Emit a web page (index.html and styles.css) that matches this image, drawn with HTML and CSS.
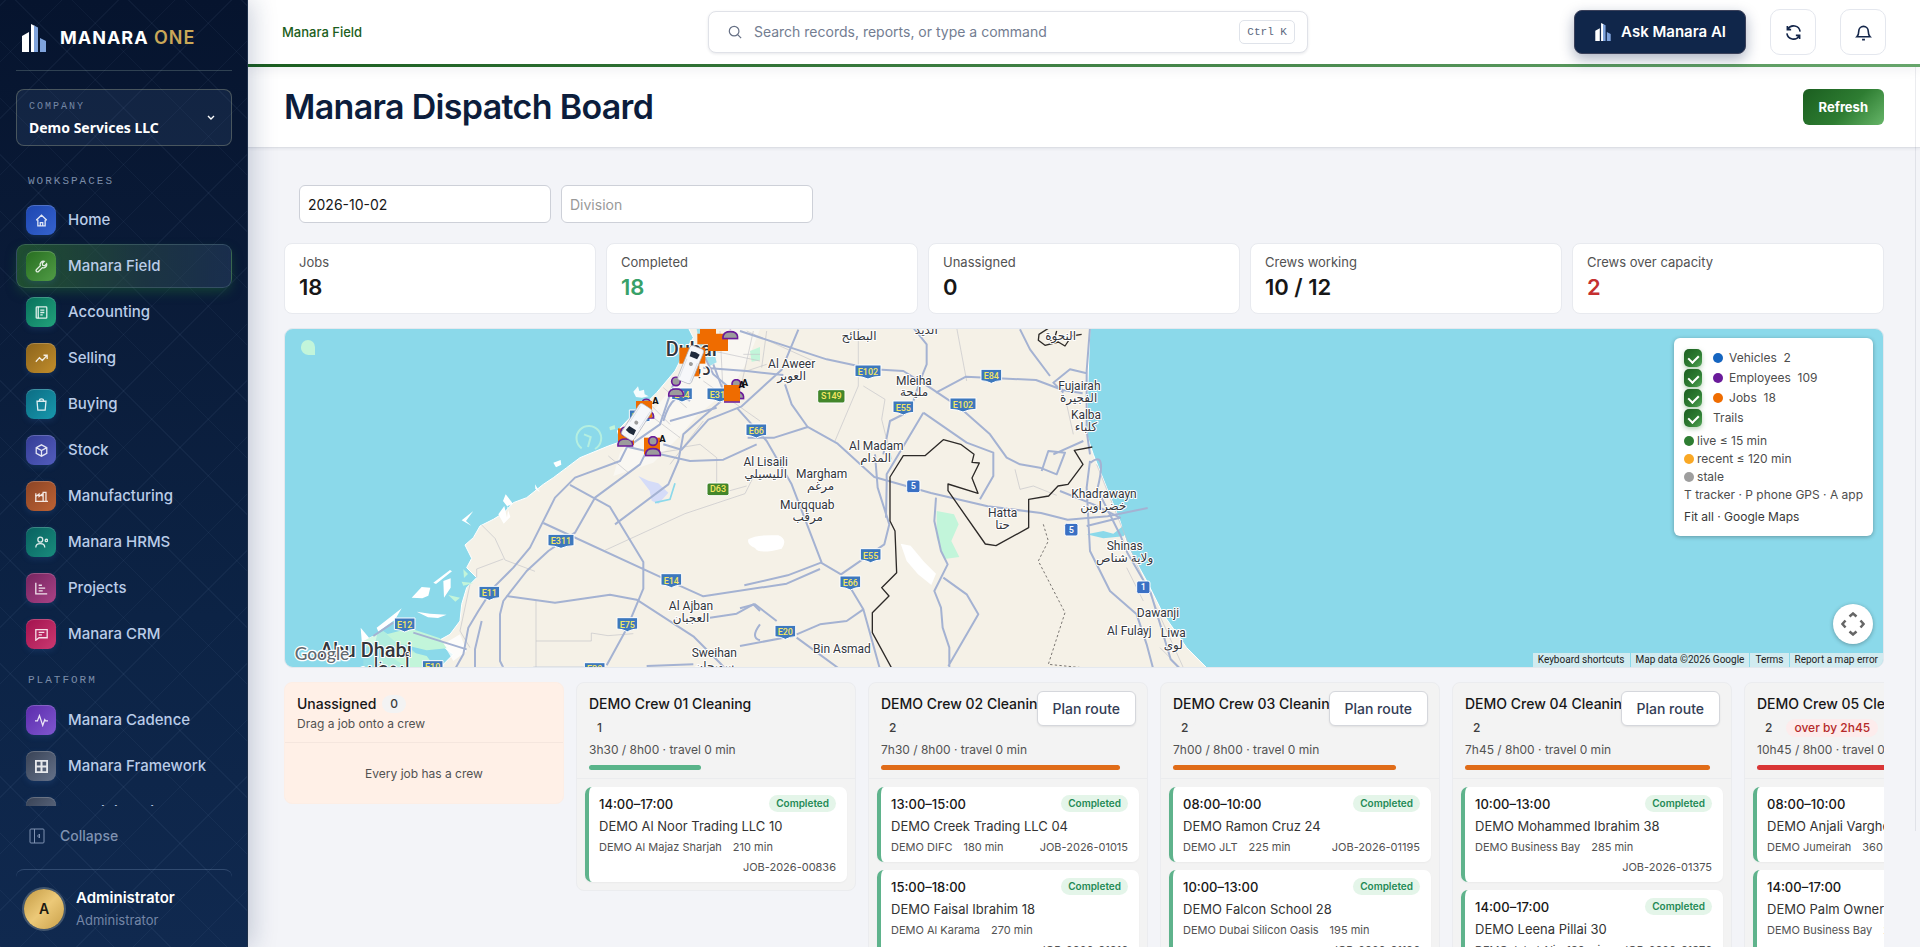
FILE: index.html
```html
<!DOCTYPE html>
<html lang="en">
<head>
<meta charset="utf-8">
<meta name="viewport" content="width=device-width, initial-scale=1">
<title>Manara Dispatch Board</title>
<link rel="stylesheet" href="styles.css">
</head>
<body>
<svg class="defs" aria-hidden="true">
  <defs>
    <symbol id="logo" viewBox="0 0 24 28">
      <path d="M0 12l7-4v20H0z" fill="#fff"/>
      <path d="M9 0l4 2v26H9z" fill="#fff"/>
      <path d="M12 1.500l4 2V28h-4z" fill="#7fa3dc"/>
      <path d="M18 14l6 3v11h-6z" fill="#7fa3dc"/>
    </symbol>
    <symbol id="shield3" viewBox="0 0 84 48"><path d="M3 3h78v34q-22 0-39 8-17-8-39-8z" fill="#3d78bd" stroke="#fff" stroke-width="3"/></symbol>
    <symbol id="shield2" viewBox="0 0 68 48"><path d="M3 3h62v34q-16 0-31 8-15-8-31-8z" fill="#3d78bd" stroke="#fff" stroke-width="3"/></symbol>
    <symbol id="person" viewBox="0 0 50 62"><circle cx="25" cy="15" r="13" fill="#9c9c9c" stroke="#6a1b9a" stroke-width="5"/><path d="M3 59v-6c3-20 41-20 44 0v6z" fill="#9c9c9c" stroke="#6a1b9a" stroke-width="5"/></symbol>
    <symbol id="van" viewBox="0 0 52 116"><rect x="4" y="2" width="44" height="112" rx="9" fill="#f6f7fa" stroke="#a9afbb" stroke-width="2"/><path d="M12 20q14-5 28 0l-2 16H14z" fill="#1f2a3c"/><circle cx="26" cy="56" r="6" fill="#9c9c9c"/><path d="M9 46v60M43 46v60" stroke="#d3d8e0" stroke-width="2"/></symbol>
  </defs>
</svg>

<aside class="sidebar">
  <div class="brand">
    <svg class="brand-logo" aria-hidden="true"><use href="#logo"/></svg>
    <span class="brand-name">MANARA <span class="brand-one">ONE</span></span>
  </div>
  <div class="company">
    <label class="company-label" for="company">COMPANY</label>
    <select class="company-select" id="company"><option>Demo Services LLC</option></select>
    <svg class="company-arrow" viewBox="0 0 8 5" aria-hidden="true"><path d="M1 1l3 3 3-3"/></svg>
  </div>
  <nav class="nav">
    <h2 class="nav-title">WORKSPACES</h2>
    <a class="nav-item" href="#"><span class="nav-icon blue"><svg viewBox="0 0 16 16"><path d="M2 8V7l6-5.500L14 7v1M3.500 7v7.500h9V7M6.500 14.500v-4h3v4"/></svg></span>Home</a>
    <a class="nav-item active" href="#"><span class="nav-icon green"><svg viewBox="0 0 16 16"><path d="M14.300 4.700L12 7 9.500 6.500 9 4l2.300-2.300A4 4 0 0 0 6.600 7L1.900 11.700a1.600 1.600 0 0 0 2.400 2.400L9 9.400a4 4 0 0 0 5.300-4.700z"/></svg></span>Manara Field</a>
    <a class="nav-item" href="#"><span class="nav-icon emerald"><svg viewBox="0 0 16 16"><rect x="1.500" y="1" width="13" height="14" rx="1"/><path d="M4 1v14M6.500 5h5M6.500 8h5M6.500 11h3"/></svg></span>Accounting</a>
    <a class="nav-item" href="#"><span class="nav-icon amber"><svg viewBox="0 0 16 16"><path d="M1 12l4.500-5 3.500 3.500L15 4M10.500 4H15v4.500"/></svg></span>Selling</a>
    <a class="nav-item" href="#"><span class="nav-icon cyan"><svg viewBox="0 0 16 16"><path d="M2.500 4h11l-1 11h-9zM5.500 4V3a2.500 2 0 0 1 5 0v1"/></svg></span>Buying</a>
    <a class="nav-item" href="#"><span class="nav-icon indigo"><svg viewBox="0 0 16 16"><path d="M8 1l6.500 3.500v7L8 15l-6.500-3.500v-7zM1.500 4.500L8 8l6.500-3.500M8 8v7"/></svg></span>Stock</a>
    <a class="nav-item" href="#"><span class="nav-icon orange"><svg viewBox="0 0 16 16"><path d="M0 14h16M1 14V4M1 8l4-3v3l4-3v3M10 14V3h3.500v11"/></svg></span>Manufacturing</a>
    <a class="nav-item" href="#"><span class="nav-icon teal"><svg viewBox="0 0 16 16"><circle cx="6.500" cy="4.500" r="3"/><path d="M1 14c0-6 11-6 11 0"/><circle cx="14" cy="5.500" r="1.500"/></svg></span>Manara HRMS</a>
    <a class="nav-item" href="#"><span class="nav-icon magenta"><svg viewBox="0 0 16 16"><path d="M1 1v13.500h14M4.500 4h4M4.500 7.500h8M4.500 11h5"/></svg></span>Projects</a>
    <a class="nav-item" href="#"><span class="nav-icon pink"><svg viewBox="0 0 16 16"><path d="M1 2h14v10H5l-4 3zM4.500 5.500h7M4.500 8.500h4"/></svg></span>Manara CRM</a>
    <h2 class="nav-title platform">PLATFORM</h2>
    <a class="nav-item" href="#"><span class="nav-icon violet"><svg viewBox="0 0 16 16"><path d="M0 8.500h3L5.500 2l4 12L12 7l1 1.500h3"/></svg></span>Manara Cadence</a>
    <a class="nav-item" href="#"><span class="nav-icon slate"><svg viewBox="0 0 16 16"><path d="M1 1h14v14H1zM8 1v14M1 8h14" stroke-width="2.500"/></svg></span>Manara Framework</a>
    <a class="nav-item" href="#"><span class="nav-icon slate"><svg viewBox="0 0 16 16"><path d="M8 1v14M1 8h14"/></svg></span>Administration</a>
  </nav>
  <button class="collapse" type="button"><svg viewBox="0 0 16 16"><rect x="1" y="1" width="14" height="14" rx="1"/><path d="M5.500 1v14M10.500 6v4L8.500 8z"/></svg>Collapse</button>
  <div class="user">
    <span class="avatar">A</span>
    <span class="user-text"><b class="user-name">Administrator</b><span class="user-role">Administrator</span></span>
  </div>
</aside>

<main class="main">
  <header class="topbar">
    <span class="crumb">Manara Field</span>
    <label class="search">
      <svg class="search-icon" viewBox="0 0 16 16" aria-hidden="true"><circle cx="7" cy="7" r="5.500"/><path d="M11 11l4 4"/></svg>
      <input class="search-input" type="text" aria-label="Search" placeholder="Search records, reports, or type a command">
      <kbd class="kbd">Ctrl K</kbd>
    </label>
    <div class="tools">
      <button class="ask" type="button"><svg class="ask-logo" aria-hidden="true"><use href="#logo"/></svg>Ask Manara AI</button>
      <button class="tool" type="button" aria-label="Reload"><svg viewBox="0 0 18 18"><path d="M3 5.500A7 7 0 0 1 16 8M15 12.500A7 7 0 0 1 2 10M2.500 2v4h4M15.500 16v-4h-4"/></svg></button>
      <button class="tool" type="button" aria-label="Notifications"><svg viewBox="0 0 18 18"><path d="M2 13.500c1.500-1.500 2-3 2-6a5 5 0 0 1 10 0c0 3 .5 4.500 2 6zM7.500 16.500h3"/></svg></button>
    </div>
  </header>

  <div class="page">
    <div class="page-head">
      <h1 class="page-title">Manara Dispatch Board</h1>
      <button class="refresh" type="button">Refresh</button>
    </div>

    <div class="content">
      <div class="filters">
        <input class="filter" type="text" aria-label="Date" value="2026-10-02">
        <input class="filter" type="text" aria-label="Division" placeholder="Division">
      </div>

      <section class="stats">
        <div class="stat"><span class="stat-label">Jobs</span><b class="stat-value">18</b></div>
        <div class="stat"><span class="stat-label">Completed</span><b class="stat-value good">18</b></div>
        <div class="stat"><span class="stat-label">Unassigned</span><b class="stat-value">0</b></div>
        <div class="stat"><span class="stat-label">Crews working</span><b class="stat-value">10 / 12</b></div>
        <div class="stat"><span class="stat-label">Crews over capacity</span><b class="stat-value bad">2</b></div>
      </section>

      <section class="map">
        <svg class="map-canvas" viewBox="285 328 1598 340" preserveAspectRatio="xMinYMin slice">
          <g transform="translate(280 320) scale(.33333)">
            <path class="land" d="M1225 20L1240 50 1215 90 1185 150 1130 215 1105 240 1050 290 1012 330 1022 362 985 375 900 410 860 440 820 470 790 490 740 530 700 545 672 575 640 595 600 615 580 650 555 672 575 712 560 740 590 770 560 800 545 850 540 900 510 940 470 962 520 1000 470 1050H2790L2720 980 2650 880 2600 780 2545 680 2520 600 2480 500 2440 400 2420 340 2425 150 2430 20z"/>
            <g fill="#fff">
              <path d="M545 598l35-28-22 30 16 14zM655 580l18-25 8 35 4-30-16-20 8-20 22 28-18 8 10 32-20 20zM460 785l50-38 6 4-48 38zM490 780l22-8v28l-20 30zM395 830l30-32 26 2-6 24-18 8zM410 872l40 6 50 3-26 10-30-2zM290 920l75-58-20 34-50 36zM242 920l25 30 25-12-6 26-40 8zM820 425l22-8 2 14-16 8zM765 490l15 24-14-10z"/>
              <path d="M1060 212l14-16 4 14 14-4 2 14 12 6-20 4-18-2z" opacity=".9"/>
              <path d="M1405 655q25-15 90-12 30 12 10 40-70 18-80-2-25-10-20-26z"/>
              <path d="M1862 668l30 6 40 48 36 36-14 34-40-32-34-40z"/>
              <path d="M1380 25h60l-40 100-30 50-60 60-60 50-50 60-80 80-120 40 20-70 70-90 90-110 100-80 60-90z" opacity=".45"/>
              <path d="M490 970l50-30 20 50-40 30z" opacity=".8"/>
            </g>
            <path d="M1250 24l10 60 30 50 20-10-10-40-20-60z" fill="#8bd9ea" opacity=".8"/>
            <g fill="#c2f5da">
              <path d="M63 78a20 20 0 0 1 42 0v24H85a22 22 0 0 1-22-24zM320 940l70-18 90 30 20 30-60 6-90-22zM360 985l80 20 30 40h-80l-60-40zM550 745l14 14-12 12zM545 782l35 4-30 8zM505 822l35 8-14 12zM988 318l16-6 2 12-16 4zM1410 90l30-12v40l-25 4zM1970 570l52 10 14 30-22 50 24 48-44 6-24-64z"/>
              <path d="M250 960l60-30 90 60 60 55H250z" opacity=".7"/>
              <path d="M905 382a37 37 0 1 1 40 2M912 340l20 8-8 30" fill="none" stroke="#b4efe0" stroke-width="6"/>
            </g>
            <path d="M1075 465l30 14 30 8 30 28-30 34-20-10-6-30z" fill="#d5dcf8"/>
            <path d="M200 1050l30-60 60-20 30 30-40 20 60 30z" fill="#8bd9ea" opacity=".7"/>
            <path d="M2420 640l50-10 30 8 30-24 20 10-20 22-60 6z" fill="#8bd9ea"/>
            <path d="M1125 545l45-10 15-48" fill="none" stroke="#8bd9ea" stroke-width="5"/>
            <g class="minor">
              <path d="M605 612l40 40 30 65 90 34M590 770v-26l80-30M570 790l-30 140 30 50M768 840v205M768 960h166v-24l50 8 76-6M1200 380l60-10 50 40v110l90-25M975 688l240-110 180-60 30-60M985 405l60 50M1110 250l60 60M1150 200l70 60M1120 290l80 60M1270 180l170 120M1300 90l140 30M1320 30l10 200M1420 30l-40 180M1110 400l90-15"/>
              <path d="M1735 20v175l-70 165M1750 195l65 40-10 60 30 120M2030 20l30 160M2205 445l15 60 40-10 70 28M2360 250l20 90M2450 430l120 300 140 310M2540 740l50 100M2640 980l60 60M1270 300l-100 130"/>
              <path d="M1400 30l200 90M1390 100h50M1400 150l60-20M1460 30l-15 110"/>
            </g>
            <g class="road">
              <path d="M1240 130l-60 60-40 120-100 70-20 40-135 50-60 60-75 150-50 60-60 60-45 70-30 50-15 80-45 80-50 60"/>
              <path d="M1270 100l30 60 60 50-60 50-90 80-15 80-30 70-160 120"/>
              <path d="M1110 370l-30 60-135 100-60 105-80 55-65 60-70 90-10 40v140l20 40M870 492l120 66 100 165v80l-50 120-60 110M790 606l380 175 100 45 250-38 100-44"/>
              <path d="M680 825l145 20 165-24 80 15 170 110 80 80 80 90M400 935l160 50M280 945l60-40M585 1045v-60l20-85"/>
              <path d="M1045 378l185 42 100-4 100-46M1150 370l55 16 80-90 100-40 120-110 50-120M1270 140l130 10 110 12M1150 300q30-100 80-60M1170 300l140-40M1370 260l90 100 75 130 90 235M1300 130l30 80 50 20"/>
              <path d="M1380 30l260 85 140 30 90 5 80 50 90 60 90 80 50 70 40 20 60 10 50 20 25-65-50-5-20 60M2320 400l90-40"/>
              <path d="M1515 190l20 60 48 68-100 32h-80M1583 318l90 50 110 100 170 48 170 40 160 20 80 20 120-10 120-25"/>
              <path d="M1900 20l40 50v60l-20 50-30 90-60 30-20 100M1930 275l-110 185v30l-2 100M1785 400l8 100 35 110-15 60-130 90-60-35-100 38-130 30"/>
              <path d="M1968 215l90-48 210 10 80 30 60 10M1930 275l130 90 80 30v70l-40 70M2220 25l30 60 60 80M2350 215l-30-30 50-40 50 12M2430 20l-10 130v180l10 70"/>
              <path d="M1968 530l-5 70 20 90 20 40-40 80 20 50 5 60 20 60v60M1990 770l70 50 35 60-90 155M1690 765l60 100 50 180M1550 940l70-30 80-10 50-35M1540 945l-160 30M1490 900l-65-50-45 12M1550 950l130 95M2430 420l-10 80 10 190 60 120 80 70 30 90 20 75M2432 425q50-40 20 80l70 140 20 50 70 120 60 200 30 30M2340 510l100 40 80 40-100 25"/>
              <path d="M1290 890l80-12 50-28 20 20M1440 910q-30 40 0 48M1100 1035l140-5M760 1040h180"/>
            </g>
            <g class="border">
              <path d="M1837 1045l-60-110v-60l50-50-22-25 45-45-5-125-15-30v-132l40-64h65l55-48 52 14 40 30-6 24 22 2-22 45 18 46-90-28v20l112 160 32 5 98-54v-85l60-10 28-30 30-5 45-60-26-42 54-10M2405 40l-30 5-20 30-20-12-40 10-20-15 2-18 28-18M2330 30l-5 18M2300 45l20 22"/>
              <path class="dashed" d="M2290 610l15 50-30 60 80 155-50 155 100 10"/>
            </g>

            <g class="shields">
              <use href="#shield2" x="1172" y="198" width="68" height="48"/><text x="1206" y="231">E44</text>
              <use href="#shield3" x="1278" y="198" width="84" height="48"/><text x="1320" y="231">E311</text>
              <use href="#shield2" x="1395" y="306" width="68" height="48"/><text x="1429" y="339">E66</text>
              <use href="#shield2" x="1045" y="264" width="68" height="48"/><text x="1078" y="297">E11</text>
              <use href="#shield3" x="801" y="637" width="84" height="48"/><text x="843" y="669">E311</text>
              <use href="#shield2" x="594" y="793" width="68" height="48"/><text x="628" y="826">E11</text>
              <use href="#shield2" x="1140" y="755" width="68" height="48"/><text x="1174" y="788">E14</text>
              <use href="#shield2" x="1008" y="887" width="68" height="48"/><text x="1042" y="920">E75</text>
              <use href="#shield2" x="340" y="888" width="68" height="48"/><text x="374" y="921">E12</text>
              <use href="#shield2" x="424" y="1016" width="68" height="48"/><text x="458" y="1048">E10</text>
              <use href="#shield2" x="910" y="1022" width="68" height="48"/><text x="944" y="1054">E20</text>
              <use href="#shield2" x="646" y="1036" width="68" height="48"/>
              <use href="#shield3" x="1722" y="129" width="84" height="48"/><text x="1764" y="162">E102</text>
              <use href="#shield2" x="2100" y="142" width="68" height="48"/><text x="2134" y="174">E84</text>
              <use href="#shield3" x="2007" y="228" width="84" height="48"/><text x="2049" y="261">E102</text>
              <use href="#shield2" x="1836" y="237" width="68" height="48"/><text x="1870" y="270">E55</text>
              <use href="#shield2" x="1738" y="680" width="68" height="48"/><text x="1772" y="713">E55</text>
              <use href="#shield2" x="1677" y="762" width="68" height="48"/><text x="1711" y="795">E66</text>
              <use href="#shield2" x="1482" y="910" width="68" height="48"/><text x="1516" y="942">E20</text>
              <g fill="#43862b" stroke="#fff" stroke-width="3"><rect x="1613" y="206" width="82" height="40" rx="6"/><rect x="1281" y="486" width="66" height="38" rx="6"/></g>
              <text x="1654" y="235">S149</text><text x="1314" y="514">D63</text>
              <g fill="#3a70c4" stroke="#fff" stroke-width="3"><rect x="1880" y="477" width="40" height="38" rx="6"/><rect x="2354" y="607" width="40" height="38" rx="6"/><rect x="2570" y="780" width="40" height="38" rx="6"/></g>
              <g class="plain"><text x="1900" y="505">5</text><text x="2374" y="635">5</text><text x="2590" y="808">1</text></g>
            </g>

            <g class="place">
              <text x="1535" y="141">Al Aweer</text><text x="1535" y="176">العوير</text>
              <text x="1737" y="58">البطائح</text><text x="1939" y="40">الذيد</text><text x="2342" y="58">النحوة</text>
              <text x="1902" y="192">Mleiha</text><text x="1902" y="226">مليحة</text>
              <text x="2398" y="207">Fujairah</text><text x="2396" y="243">الفجيرة</text>
              <text x="2418" y="294">Kalba</text><text x="2418" y="330">كلباء</text>
              <text x="1789" y="387">Al Madam</text><text x="1787" y="422">المدام</text>
              <text x="1457" y="435">Al Lisaili</text><text x="1457" y="471">الليسيلي</text>
              <text x="1625" y="471">Margham</text><text x="1622" y="507">مرغم</text>
              <text x="1582" y="564">Murqquab</text><text x="1583" y="601">مرقب</text>
              <text x="2168" y="588">Hatta</text><text x="2168" y="624">حتا</text>
              <text x="2472" y="531">Khadrawayn</text><text x="2470" y="567">خضراوين</text>
              <text x="2534" y="687">Shinas</text><text x="2534" y="723">ولاية شناص</text>
              <text x="2634" y="888">Dawanji</text><text x="2548" y="943">Al Fulayj</text>
              <text x="2680" y="948">Liwa</text><text x="2680" y="984">لوى</text>
              <text x="1686" y="996">Bin Asmad</text>
              <text x="1233" y="867">Al Ajban</text><text x="1233" y="902">العجبان</text>
              <text x="1303" y="1008">Sweihan</text><text x="1303" y="1046">سويحان</text>
              <g class="city"><text x="1234" y="104">Dubai</text><text x="1246" y="162">دبي</text><text x="258" y="1008">Abu Dhabi</text><text x="300" y="1052">أبوظبي</text></g>
            </g>

            <g fill="#ef6c00">
              <path d="M1260 24h48v14h36v52h-60v-20h-32V38h8z"/><rect x="1198" y="80" width="78" height="48"/><rect x="1210" y="120" width="48" height="46"/>
            </g>
            <use href="#person" x="1326" y="-6" width="50" height="62"/>
            <use href="#person" x="1163" y="166" width="50" height="62"/>
            <use href="#person" x="1344" y="174" width="50" height="62"/>
            <rect x="1332" y="192" width="48" height="50" fill="#ef6c00"/><path d="M1332 243h48" stroke="#6a1b9a" stroke-width="5"/>
            <use href="#person" x="1074" y="232" width="50" height="62"/>
            <rect x="1068" y="240" width="48" height="50" fill="#ef6c00"/>
            <rect x="1014" y="322" width="48" height="50" fill="#ef6c00"/>
            <use href="#person" x="1011" y="316" width="50" height="62"/>
            <rect x="1092" y="350" width="48" height="50" fill="#ef6c00"/>
            <use href="#person" x="1094" y="345" width="50" height="62"/>
            <g class="tag"><text x="1126" y="250">A</text><text x="1147" y="364">A</text><text x="1385" y="200">A</text><text x="1395" y="194">A</text></g>
            <use href="#van" x="1206" y="73" width="52" height="116" transform="rotate(22 1232 131)"/>
            <use href="#van" x="1044" y="245" width="52" height="116" transform="rotate(213 1070 303)"/>
            <text class="google" x="44" y="1018">Google</text>
          </g>
        </svg>
        <div class="legend">
          <label class="layer"><input class="tick" type="checkbox" checked><i class="dot vehicles"></i>Vehicles&nbsp; 2</label>
          <label class="layer"><input class="tick" type="checkbox" checked><i class="dot employees"></i>Employees&nbsp; 109</label>
          <label class="layer"><input class="tick" type="checkbox" checked><i class="dot jobs"></i>Jobs&nbsp; 18</label>
          <label class="layer"><input class="tick" type="checkbox" checked>Trails</label>
          <div class="ages">
            <span class="age"><i class="dot live"></i>live ≤ 15 min</span>
            <span class="age"><i class="dot recent"></i>recent ≤ 120 min</span>
            <span class="age"><i class="dot stale"></i>stale</span>
            <span class="age">T tracker · P phone GPS · A app</span>
          </div>
          <div class="legend-links"><a href="#">Fit all</a> · <a href="#">Google Maps</a></div>
        </div>
        <button class="camera" type="button" aria-label="Map camera controls"><svg viewBox="0 0 24 24"><path d="M8.500 4.500L12 1.500l3.500 3M8.500 19.500l3.500 3 3.500-3M4.500 8.500l-3 3.500 3 3.500M19.500 8.500l3 3.500-3 3.500"/></svg></button>
        <div class="credits"><button class="credit" type="button">Keyboard shortcuts</button><span class="credit">Map data ©2026 Google</span><a class="credit" href="#">Terms</a><a class="credit" href="#">Report a map error</a></div>
      </section>

      <section class="board">
        <article class="lane unassigned">
          <header class="lane-head"><h3 class="lane-title">Unassigned<span class="count">0</span></h3><p class="lane-sub">Drag a job onto a crew</p></header>
          <p class="empty">Every job has a crew</p>
        </article>

        <article class="lane">
          <header class="lane-head"><h3 class="lane-title">DEMO Crew 01 Cleaning</h3><div class="badges"><span class="count">1</span></div><p class="lane-sub">3h30 / 8h00 · travel 0 min</p><div class="load"><div class="fill ok" style="width:43.75%"></div></div></header>
          <div class="jobs-list">
            <div class="job"><div class="job-top"><b class="job-time">14:00–17:00</b><span class="pill">Completed</span></div><div class="job-name">DEMO Al Noor Trading LLC 10</div><div class="job-meta"><span>DEMO Al Majaz Sharjah</span><span>210 min</span><span class="job-id">JOB-2026-00836</span></div></div>
          </div>
        </article>

        <article class="lane">
          <button class="plan" type="button">Plan route</button>
          <header class="lane-head"><h3 class="lane-title">DEMO Crew 02 Cleaning</h3><div class="badges"><span class="count">2</span></div><p class="lane-sub">7h30 / 8h00 · travel 0 min</p><div class="load"><div class="fill near" style="width:93.75%"></div></div></header>
          <div class="jobs-list">
            <div class="job"><div class="job-top"><b class="job-time">13:00–15:00</b><span class="pill">Completed</span></div><div class="job-name">DEMO Creek Trading LLC 04</div><div class="job-meta"><span>DEMO DIFC</span><span>180 min</span><span class="job-id">JOB-2026-01015</span></div></div>
            <div class="job"><div class="job-top"><b class="job-time">15:00–18:00</b><span class="pill">Completed</span></div><div class="job-name">DEMO Faisal Ibrahim 18</div><div class="job-meta"><span>DEMO Al Karama</span><span>270 min</span><span class="job-id">JOB-2026-01016</span></div></div>
          </div>
        </article>

        <article class="lane">
          <button class="plan" type="button">Plan route</button>
          <header class="lane-head"><h3 class="lane-title">DEMO Crew 03 Cleaning</h3><div class="badges"><span class="count">2</span></div><p class="lane-sub">7h00 / 8h00 · travel 0 min</p><div class="load"><div class="fill near" style="width:87.5%"></div></div></header>
          <div class="jobs-list">
            <div class="job"><div class="job-top"><b class="job-time">08:00–10:00</b><span class="pill">Completed</span></div><div class="job-name">DEMO Ramon Cruz 24</div><div class="job-meta"><span>DEMO JLT</span><span>225 min</span><span class="job-id">JOB-2026-01195</span></div></div>
            <div class="job"><div class="job-top"><b class="job-time">10:00–13:00</b><span class="pill">Completed</span></div><div class="job-name">DEMO Falcon School 28</div><div class="job-meta"><span>DEMO Dubai Silicon Oasis</span><span>195 min</span><span class="job-id">JOB-2026-01196</span></div></div>
          </div>
        </article>

        <article class="lane">
          <button class="plan" type="button">Plan route</button>
          <header class="lane-head"><h3 class="lane-title">DEMO Crew 04 Cleaning</h3><div class="badges"><span class="count">2</span></div><p class="lane-sub">7h45 / 8h00 · travel 0 min</p><div class="load"><div class="fill near" style="width:96.25%"></div></div></header>
          <div class="jobs-list">
            <div class="job"><div class="job-top"><b class="job-time">10:00–13:00</b><span class="pill">Completed</span></div><div class="job-name">DEMO Mohammed Ibrahim 38</div><div class="job-meta"><span>DEMO Business Bay</span><span>285 min</span><span class="job-id">JOB-2026-01375</span></div></div>
            <div class="job"><div class="job-top"><b class="job-time">14:00–17:00</b><span class="pill">Completed</span></div><div class="job-name">DEMO Leena Pillai 30</div><div class="job-meta"><span>DEMO Jebel Ali</span><span>180 min</span><span class="job-id">JOB-2026-01376</span></div></div>
          </div>
        </article>

        <article class="lane">
          <button class="plan" type="button">Plan route</button>
          <header class="lane-head"><h3 class="lane-title">DEMO Crew 05 Cleaning</h3><div class="badges"><span class="count">2</span><span class="over">over by 2h45</span></div><p class="lane-sub">10h45 / 8h00 · travel 0 min</p><div class="load"><div class="fill full" style="width:100%"></div></div></header>
          <div class="jobs-list">
            <div class="job"><div class="job-top"><b class="job-time">08:00–10:00</b><span class="pill">Completed</span></div><div class="job-name">DEMO Anjali Varghese 12</div><div class="job-meta"><span>DEMO Jumeirah</span><span>360 min</span></div></div>
            <div class="job"><div class="job-top"><b class="job-time">14:00–17:00</b><span class="pill">Completed</span></div><div class="job-name">DEMO Palm Owners 06</div><div class="job-meta"><span>DEMO Business Bay</span><span>285 min</span><span class="job-id">JOB-2026-01556</span></div></div>
          </div>
        </article>
      </section>
    </div>
  </div>
</main>
</body>
</html>
```
FILE: styles.css
```css
* { box-sizing: border-box; }
body {
  margin: 0;
  display: flex;
  height: 100vh;
  overflow: hidden;
  font: 14px/20px Inter, "Liberation Sans", sans-serif;
  color: #171717;
  background: #f3f4f8;
}
h1, h2, h3, p { margin: 0; font-weight: inherit; }
button, input, select { font: inherit; color: inherit; }
button { cursor: pointer; padding: 0; border: 0; background: none; }
a { color: inherit; text-decoration: none; }
svg { display: block; }
.defs { position: absolute; width: 0; height: 0; }

/* Sidebar */
.sidebar {
  position: relative;
  z-index: 3;
  flex: none;
  width: 248px;
  padding: 0 15px 0 16px;
  display: flex;
  flex-direction: column;
  border-right: 1px solid #1d2f49;
  background:
    repeating-linear-gradient(45deg, rgba(160, 190, 230, .05) 0 1px, transparent 1px 40px),
    repeating-linear-gradient(-45deg, rgba(160, 190, 230, .05) 0 1px, transparent 1px 40px),
    linear-gradient(#06142e, #0a1b38 30%, #0c2345 65%, #10294f);
  box-shadow: 4px 0 24px rgba(20, 40, 90, .22);
}
.brand {
  display: flex;
  align-items: center;
  gap: 14px;
  height: 71px;
  padding: 6px 6px 0;
  border-bottom: 1px solid rgba(150, 180, 170, .28);
}
.brand-logo { width: 24px; height: 28px; }
.brand-name { color: #fff; font-size: 18px; font-weight: 700; letter-spacing: 1px; white-space: nowrap; }
.brand-one { color: #c9a858; font-weight: 600; }
.company {
  position: relative;
  flex: none;
  height: 57px;
  margin: 18px 0 25px;
  border: 1px solid rgba(170, 175, 140, .36);
  border-radius: 8px;
  background: rgba(80, 110, 160, .16);
}
.company-label {
  position: absolute;
  left: 12px;
  top: 9px;
  font: 10px/16px "Liberation Mono", monospace;
  letter-spacing: 2px;
  color: #7486a3;
}
.company-select {
  appearance: none;
  width: 100%;
  height: 100%;
  padding: 20px 32px 0 12px;
  border: 0;
  background: none;
  color: #fff;
  font: 700 14px/20px "Noto Sans", sans-serif;
}
.company-arrow { position: absolute; right: 16px; top: 25px; width: 8px; height: 5px; fill: none; stroke: #fff; stroke-width: 1.400; overflow: visible; }
.nav { flex: 1; min-height: 0; overflow: hidden; display: flex; flex-direction: column; gap: 2px; margin: 0 -15px; padding: 0 15px; }
.nav-title { flex: none; margin-bottom: 5px; padding: 0 12px; font: 11px/20px "Liberation Mono", monospace; letter-spacing: 2px; color: #7b8ca8; }
.platform { margin-top: 12px; margin-bottom: 6px; }
.nav-item {
  flex: none;
  display: flex;
  align-items: center;
  gap: 12px;
  height: 44px;
  padding: 0 9px;
  border: 1px solid transparent;
  border-radius: 9px;
  color: #bacce8;
  font-size: 15px;
  font-weight: 500;
}
.nav-item.active {
  border-color: rgba(150, 190, 190, .22);
  background: linear-gradient(90deg, rgba(45, 110, 45, .62), rgba(50, 85, 80, .45) 60%, rgba(50, 75, 110, .4));
  box-shadow: 0 5px 12px -2px rgba(30, 110, 50, .5);
}
.nav-icon { display: grid; place-items: center; width: 30px; height: 30px; border-radius: 8px; box-shadow: 0 2px 6px rgba(60, 120, 200, .2), inset 0 1px rgba(255, 255, 255, .2); }
.nav-icon svg { width: 13px; height: 13px; fill: none; stroke: rgba(255, 255, 255, .86); stroke-width: 1.600; }
.blue { background: linear-gradient(135deg, #1d46b0, #3563cf); }
.green { background: linear-gradient(135deg, #276e20, #519c46); }
.emerald { background: linear-gradient(135deg, #08705c, #22a37c); }
.amber { background: linear-gradient(135deg, #8c641c, #c18d2b); }
.cyan { background: linear-gradient(135deg, #0b6c83, #1898ad); }
.indigo { background: linear-gradient(135deg, #343c95, #525dbd); }
.orange { background: linear-gradient(135deg, #8b4425, #bd6234); }
.teal { background: linear-gradient(135deg, #08605f, #198d7d); }
.magenta { background: linear-gradient(135deg, #75245f, #a94286); }
.pink { background: linear-gradient(135deg, #a3124e, #cb3971); }
.violet { background: linear-gradient(135deg, #5b2bab, #8058d0); }
.slate { background: linear-gradient(135deg, #384255, #65728a); }
.collapse { display: flex; align-items: center; gap: 15px; height: 44px; margin: 8px 0 11px; padding: 0 13px; color: #7f92b1; font-size: 14px; font-weight: 500; }
.collapse svg { width: 16px; height: 16px; fill: none; stroke: currentColor; }
.user { display: flex; align-items: center; gap: 12px; height: 78px; padding: 0 8px; border-top: 1px solid rgba(150, 180, 220, .25); border-radius: 8px; }
.avatar { display: grid; place-items: center; width: 40px; height: 40px; border-radius: 50%; color: #1d1a12; font-weight: 600; background: linear-gradient(135deg, #c39a44, #ecc978 50%, #c9a04a); box-shadow: 0 0 0 2px rgba(130, 145, 150, .45); }
.user-text { display: grid; gap: 2px; }
.user-name { color: #fff; font-size: 15px; font-weight: 600; }
.user-role { color: #7486a6; font-size: 13px; }

/* Top bar */
.main { position: relative; flex: 1; min-width: 0; display: flex; flex-direction: column; }
.main::after { content: ""; position: absolute; top: 67px; right: 0; width: 4px; height: 764px; border-left: 1px solid rgba(60, 70, 100, .1); }
.topbar {
  position: relative;
  z-index: 2;
  flex: none;
  display: grid;
  grid-template-columns: 14fr 600px 19fr;
  align-items: center;
  height: 67px;
  padding: 0 34px 3px;
  background: linear-gradient(90deg, #1b5e20, #66a56b) bottom / 100% 3px no-repeat, #fff;
  box-shadow: 0 2px 12px rgba(20, 30, 60, .07);
}
.crumb { color: #1b5e20; font-size: 13px; font-weight: 500; }
.search { display: flex; align-items: center; gap: 12px; height: 42px; padding: 0 12px 0 19px; border: 1px solid #e0e2e8; border-radius: 8px; background: #fff; box-shadow: 0 1px 3px rgba(20, 30, 60, .1); }
.search-icon { width: 14px; height: 14px; fill: none; stroke: #667085; stroke-width: 1.400; }
.search-input { flex: 1; min-width: 0; padding: 0; border: 0; outline: 0; background: none; }
.search-input::placeholder { color: #737d91; opacity: 1; }
.kbd { padding: 1px 7px; border: 1px solid #dfe3ea; border-radius: 5px; color: #5c687e; font: 11px/20px "Liberation Mono", monospace; }
.tools { display: flex; align-items: center; justify-content: flex-end; gap: 24px; }
.ask { display: flex; align-items: center; gap: 10px; height: 44px; padding: 0 19px 0 20px; border: 1px solid #3a405a; border-radius: 8px; color: #fff; font-weight: 600; font-size: 15px; white-space: nowrap; background: #10264a; box-shadow: 0 5px 14px rgba(15, 35, 80, .35); }
.ask-logo { width: 16px; height: 18px; }
.tool { display: grid; place-items: center; width: 46px; height: 46px; border: 1px solid #e4e7ee; border-radius: 10px; background: #fff; }
.tool svg { width: 17px; height: 17px; fill: none; stroke: #14264a; stroke-width: 1.700; }

/* Page */
.page { flex: 1; min-height: 0; overflow: hidden; }
.page-head { display: flex; align-items: center; justify-content: space-between; height: 81px; padding: 0 36px; background: #fff; border-bottom: 1px solid #dddfe5; box-shadow: 0 1px 3px rgba(20, 30, 60, .07); }
.page-title { color: #0c1d3c; font-size: 34px; line-height: 44px; font-weight: 600; letter-spacing: -.02em; }
.refresh { height: 36px; padding: 0 16px; border-radius: 6px; color: #fff; font-size: 13px; font-weight: 700; background: linear-gradient(135deg, #1b5e20, #2e7d32 55%, #66b568); }
.content { padding: 37px 36px 0; }
.filters { display: flex; gap: 10px; padding: 0 15px; margin-bottom: 20px; }
.filter { width: 252px; height: 38px; padding: 0 8px; border: 1px solid #cdd0d8; border-radius: 6px; background: #fff; }
.filter::placeholder { color: #999; opacity: 1; }
.stats { display: grid; grid-template-columns: repeat(5, 1fr); gap: 10px; margin-bottom: 14px; }
.stat { display: grid; padding: 8px 14px 11px; border: 1px solid #e8eaef; border-radius: 8px; background: #fff; }
.stat-label { font-size: 13px; color: #525252; }
.stat-value { font-size: 22px; line-height: 30px; font-weight: 600; }
.good { color: #38a169; }
.bad { color: #c53030; }

/* Map */
.map { position: relative; height: 340px; margin-bottom: 14px; border: 1px solid #e4e8ee; border-radius: 9px; overflow: hidden; background: #8bd9ea; }
.map-canvas { width: 100%; height: 100%; font-family: Roboto, "DejaVu Sans", sans-serif; }
.land { fill: #f5f1e7; stroke: #fff; stroke-width: 3; }
.road path, .minor path, .border path { fill: none; stroke-linejoin: round; }
.road path { stroke: #a4b2d2; stroke-width: 6; }
.minor path { stroke: #c4c4c8; stroke-width: 2; }
.border path { stroke: #2d2a28; stroke-width: 4; }
.border .dashed { stroke: #77736f; stroke-width: 3; stroke-dasharray: 7 7; }
.shields text { fill: #f5e663; font-size: 27px; font-weight: 500; text-anchor: middle; }
.shields .plain text { fill: #fff; }
.place text { fill: #33363c; font-size: 36px; text-anchor: middle; stroke: #fff; stroke-width: 6px; stroke-linejoin: round; paint-order: stroke; }
.place .city text { font-weight: 500; font-size: 60px; }
.tag text { font-size: 28px; font-weight: 900; fill: #111; text-anchor: middle; }
.map-canvas .google { font: 500 52px Lato, sans-serif; fill: #626a70; stroke: #fff; stroke-width: 8px; paint-order: stroke; }
.legend { position: absolute; top: 9px; right: 10px; padding: 10px; border-radius: 6px; background: #fff; color: #4d4d4d; font-size: 12px; line-height: 18px; box-shadow: 0 1px 4px rgba(0, 0, 0, .3); }
.layer { display: flex; align-items: center; gap: 6px; height: 20px; }
.tick { appearance: none; position: relative; width: 18px; height: 18px; margin: 0 5px 0 0; border-radius: 5px; background: linear-gradient(135deg, #1b5e20, #2e7d32 60%, #58a95c); box-shadow: 0 2px 5px rgba(46, 125, 50, .35); }
.tick::after { content: ""; position: absolute; left: 6px; top: 4px; width: 5px; height: 8px; border: solid #fff; border-width: 0 2px 2px 0; transform: rotate(45deg); }
.dot { flex: none; width: 10px; height: 10px; border-radius: 50%; }
.vehicles { background: #1565c0; }
.employees { background: #6a1b9a; }
.jobs { background: #ef6c00; }
.live { background: #2e7d32; }
.recent { background: #f9a825; }
.stale { background: #9e9e9e; }
.ages { display: grid; margin: 4px 0; }
.age { display: flex; align-items: center; gap: 3px; }
.legend-links { color: #383838; }
.camera { position: absolute; right: 10px; bottom: 23px; display: grid; place-items: center; width: 40px; height: 40px; border-radius: 50%; background: #fff; box-shadow: 0 1px 4px rgba(0, 0, 0, .3); }
.camera svg { width: 24px; height: 24px; fill: none; stroke: #666; stroke-width: 2.500; }
.credits { position: absolute; right: 0; bottom: 0; display: flex; gap: 1px; font: 10px/14px Roboto, sans-serif; color: #222; }
.credit { padding: 0 5px; background: rgba(232, 240, 242, .75); }

/* Board */
.board { display: flex; align-items: flex-start; gap: 12px; overflow: hidden; }
.lane { position: relative; flex: none; width: 280px; border: 1px solid #ebecef; border-radius: 8px; background: #f3f3f3; }
.lane-head { padding: 10px 11px 8px 12px; border-bottom: 1px solid #ebecee; }
.lane-title { display: flex; align-items: center; gap: 6px; font-size: 14px; line-height: 21px; font-weight: 500; white-space: nowrap; }
.lane-sub { font-size: 12px; line-height: 20px; color: #525252; }
.badges { display: flex; align-items: center; height: 24px; margin-top: 2px; gap: 6px; }
.count { display: inline-block; padding: 0 8px; border-radius: 9px; font-size: 12px; line-height: 18px; font-weight: 500; color: #3d3d3d; background: #f3f3f3; }
.over { padding: 0 8px; border-radius: 9px; font-size: 12px; line-height: 18px; font-weight: 500; color: #b52a2a; background: #fdecec; }
.load { height: 5px; margin-top: 5px; }
.fill { height: 5px; border-radius: 3px; }
.ok { background: #59b48a; }
.near { background: #e06c19; }
.full { background: #d93636; }
.unassigned, .unassigned .lane-head { border-color: #fdeee5; }
.unassigned { background: #fff0e7; }
.unassigned .lane-head { border-bottom-color: #f5e6de; }
.empty { padding: 21px 12px 19px; font-size: 12px; text-align: center; color: #525252; }
.plan { position: absolute; top: 8px; right: 11px; height: 35px; padding: 0 15px; border: 1px solid #d5d7dc; border-radius: 6px; color: #343d55; font-weight: 500; background: #fff; box-shadow: 0 1px 2px rgba(0, 0, 0, .08); }
.jobs-list { display: grid; gap: 8px; padding: 8px; }
.job { padding: 8px 11px 5px 10px; border-left: 4px solid #5fb38c; border-radius: 7px; background: #fff; box-shadow: 0 1px 2px rgba(0, 0, 0, .04); }
.job-top { display: flex; align-items: center; justify-content: space-between; height: 17px; }
.job-time { font-size: 13px; font-weight: 500; }
.pill { padding: 0 7px; border-radius: 9px; font-size: 10px; line-height: 17px; font-weight: 600; color: #1f8a55; background: #e4f5e9; }
.job-name { margin-top: 3px; font-size: 13px; line-height: 22px; color: #333; white-space: nowrap; }
.job-meta { display: flex; flex-wrap: wrap; column-gap: 11px; font-size: 11px; line-height: 20px; color: #525252; }
.job-id { margin-left: auto; }
```
